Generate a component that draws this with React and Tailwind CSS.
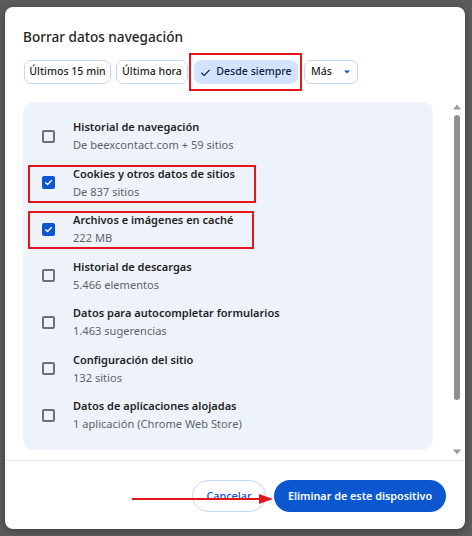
import React from 'react';

const items = [
  { title: 'Historial de navegación', sub: 'De beexcontact.com + 59 sitios', checked: false },
  { title: 'Cookies y otros datos de sitios', sub: 'De 837 sitios', checked: true, mark: 'w-[228px]' },
  { title: 'Archivos e imágenes en caché', sub: '222 MB', checked: true, mark: 'w-[226px]' },
  { title: 'Historial de descargas', sub: '5.466 elementos', checked: false },
  { title: 'Datos para autocompletar formularios', sub: '1.463 sugerencias', checked: false },
  { title: 'Configuración del sitio', sub: '132 sitios', checked: false },
  { title: 'Datos de aplicaciones alojadas', sub: '1 aplicación (Chrome Web Store)', checked: false },
];

const Checkbox = ({ checked }) =>
  checked ? (
    <span className="flex h-[13px] w-[13px] items-center justify-center rounded-[2px] bg-[#0b57d0]">
      <svg width="9" height="9" viewBox="0 0 10 10" fill="none">
        <path d="M1.8 5.2l2.2 2.1 4.3-4.6" stroke="white" strokeWidth="1.5" strokeLinecap="round" strokeLinejoin="round" />
      </svg>
    </span>
  ) : (
    <span className="block h-[13px] w-[13px] rounded-[2px] border-2 border-[#6f7173]" />
  );

const Chip = ({ children, selected, width }) => (
  <span
    className={`flex h-[24px] items-center justify-center gap-[5px] rounded-[7px] border text-[10.6px] ${width} ${
      selected ? 'border-[#d3e3fd] bg-[#d3e3fd] font-medium text-[#0a1e47]' : 'border-[#c4d7f5] bg-white font-medium text-[#1f1f1f]'
    }`}
  >
    {children}
  </span>
);

const App = () => {
  return (
    <div className="h-[536px] w-[472px] overflow-hidden bg-[#5c5c5c] pl-[5px] pt-[7px]" style={{ fontFamily: '"Noto Sans", "Open Sans", sans-serif' }}>
      <div className="relative flex h-[522px] w-[460px] flex-col overflow-hidden rounded-[8px] bg-white shadow-[0_2px_8px_rgba(0,0,0,0.35)]">
        <h1 className="pl-[18px] pt-[20px] text-[13.6px] font-medium leading-[20px] text-[#1f1f1f]">Borrar datos navegación</h1>

        <div className="mt-[13px] flex gap-[5px] pl-[19px]">
          <Chip width="w-[87px]">Últimos 15 min</Chip>
          <Chip width="w-[72px]">Última hora</Chip>
          <div className="relative ml-[1px]">
            <Chip selected width="w-[104px]">
              <svg width="11" height="11" viewBox="0 0 12 12" fill="none">
                <path d="M1.5 6.3l3 3 6-6.2" stroke="#0a1e47" strokeWidth="1.3" />
              </svg>
              Desde siempre
            </Chip>
            <span className="absolute -bottom-[7px] -left-[5px] -right-[4px] -top-[7px] border-2 border-[#e3161b]" />
          </div>
          <span className="ml-[1px]">
            <Chip width="w-[54px]">
              Más
              <svg width="8" height="8" viewBox="0 0 8 8" className="ml-[6px]">
                <path d="M1 2.5h6L4 5.5z" fill="#0b57d0" />
              </svg>
            </Chip>
          </span>
        </div>

        <div className="mt-[16px] flex h-[360px] overflow-hidden">
          <div className="ml-[18px] mt-[2px] w-[410px] shrink-0">
            <div className="rounded-[10px] bg-[#eef3fb] py-[11px]">
              {items.map((it) => (
                <div key={it.title} className="relative flex h-[46.5px] items-center">
                  <div className="flex w-[50px] justify-center pl-[1px]">
                    <Checkbox checked={it.checked} />
                  </div>
                  <div className="leading-[18px]">
                    <div className="text-[11px] font-semibold text-[#1f1f1f]">{it.title}</div>
                    <div className="text-[11.1px] text-[#5f6368]">{it.sub}</div>
                  </div>
                  {it.mark && (
                    <span className={`absolute left-[5px] top-[5px] h-[38px] border-2 border-[#e3161b] ${it.mark}`} />
                  )}
                </div>
              ))}
            </div>
            <div className="mt-[10px] h-[20px] rounded-t-[10px] bg-[#eef3fb]" />
          </div>

          <div className="ml-[18px] flex w-[12px] flex-col items-center pt-[4px]">
            <svg width="8" height="6" viewBox="0 0 8 6">
              <path d="M0 5.5h8L4 0.5z" fill="#9a9a9a" />
            </svg>
            <div className="mt-[5px] h-[285px] w-[6px] rounded-full bg-[#8f8f8f]" />
            <div className="flex-1" />
            <svg width="8" height="6" viewBox="0 0 8 6" className="mb-[5px]">
              <path d="M0 0.5h8L4 5.5z" fill="#9a9a9a" />
            </svg>
          </div>
        </div>

        <div className="border-t border-[#e3e6ea]" />

        <div className="flex justify-end gap-[8px] pr-[19px] pt-[19px]">
          <button className="h-[32px] w-[74px] rounded-full border border-[#c4d7f5] text-[10.8px] font-medium text-[#0b57d0]">Cancelar</button>
          <button className="h-[32px] w-[172px] rounded-full bg-[#0b57d0] text-[10.8px] font-semibold text-white">Eliminar de este dispositivo</button>
        </div>

        <svg className="absolute left-[126px] top-[486px]" width="144" height="12" viewBox="0 0 144 12">
          <path d="M1 6h128" stroke="#e3161b" strokeWidth="2" />
          <path d="M128 1l14 5-14 5z" fill="#e3161b" />
        </svg>
      </div>
    </div>
  );
};

export default App;
